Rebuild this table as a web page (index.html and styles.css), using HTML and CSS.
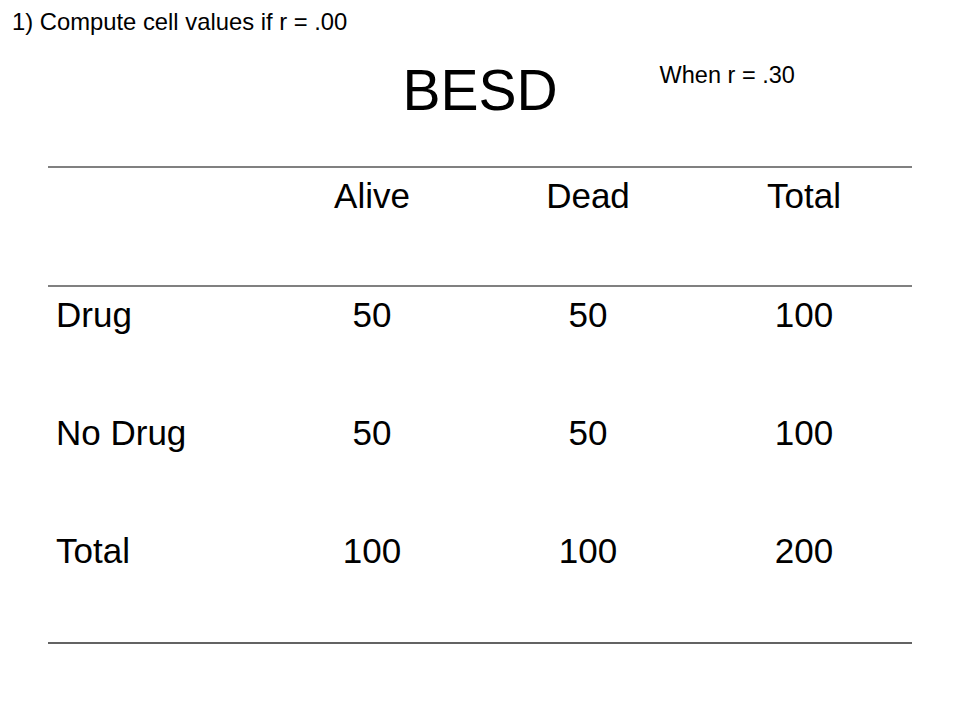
FILE: index.html
```html
<!DOCTYPE html>
<html>
<head>
<meta charset="utf-8">
<link rel="stylesheet" href="styles.css">
</head>
<body>
<div class="slide">
  <p class="task">1) Compute cell values if r = .00</p>
  <div class="heading">
    <span class="spacer"></span>
    <h1 class="title">BESD</h1>
    <span class="note">When r = .30</span>
  </div>
  <table class="besd">
    <colgroup><col><col><col><col></colgroup>
    <thead>
      <tr><th></th><th>Alive</th><th>Dead</th><th>Total</th></tr>
    </thead>
    <tbody>
      <tr><td class="label">Drug</td><td>50</td><td>50</td><td>100</td></tr>
      <tr><td class="label">No Drug</td><td>50</td><td>50</td><td>100</td></tr>
      <tr class="last"><td class="label">Total</td><td>100</td><td>100</td><td>200</td></tr>
    </tbody>
  </table>
</div>
</body>
</html>
```
FILE: styles.css
```css
html, body {
  margin: 0;
  padding: 0;
  background: #ffffff;
}
.slide {
  width: 960px;
  height: 720px;
  font-family: "Liberation Sans", Arial, sans-serif;
  color: #000;
  overflow: hidden;
}
.task {
  margin: 0;
  padding: 8px 0 0 12px;
  font-size: 23.8px;
  line-height: 27px;
  height: 27px;
}
.heading {
  display: grid;
  grid-template-columns: 1fr auto 1fr;
  margin-top: 22px;
  height: 66px;
}
.title {
  margin: 0;
  font-weight: normal;
  font-size: 57px;
  line-height: 66px;
  text-align: center;
}
.note {
  font-size: 23.5px;
  line-height: 27px;
  padding: 5px 0 0 102px;
}
.besd {
  margin: 43px 0 0 48px;
  width: 864px;
  table-layout: fixed;
  border-collapse: separate;
  border-spacing: 0;
  font-size: 35px;
}
.besd col {
  width: 216px;
}
.besd th,
.besd td {
  font-weight: normal;
  text-align: center;
  vertical-align: top;
  padding: 8px 0 0 0;
  line-height: 40px;
}
.besd th {
  border-top: 2px solid #808080;
  border-bottom: 2px solid #808080;
  height: 109px;
}
.besd td {
  height: 110px;
}
.besd td.label {
  text-align: left;
  padding-left: 8px;
}
.besd tr.last td {
  height: 111px;
  border-bottom: 2px solid #636363;
}
```
